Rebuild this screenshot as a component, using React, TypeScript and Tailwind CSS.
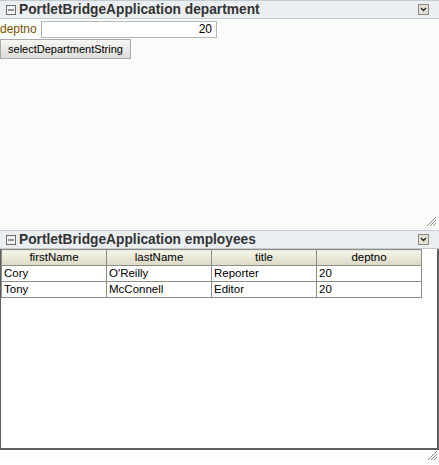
import React from "react";

const font = { fontFamily: "'Liberation Sans', Arial, sans-serif" };

const MinusBox = () => (
  <svg width="10" height="10" viewBox="0 0 10 10" className="shrink-0">
    <rect x="0.5" y="0.5" width="9" height="9" fill="#f4f4f4" stroke="#6d6d6d" />
    <rect x="2" y="4.5" width="6" height="1" fill="#333" />
  </svg>
);

const MenuBox = () => (
  <svg width="11" height="11" viewBox="0 0 11 11" className="shrink-0">
    <rect x="0.5" y="0.5" width="10" height="10" fill="#e4e0d4" stroke="#8a8a80" />
    <path d="M3 4 L5.5 6.5 L8 4" fill="none" stroke="#222" strokeWidth="1.4" />
  </svg>
);

const Grip = () => (
  <svg width="11" height="11" viewBox="0 0 11 11">
    <path d="M1 10 L10 1 M4 10 L10 4 M7 10 L10 7" stroke="#8c8c8c" strokeWidth="1" />
  </svg>
);

const TitleBar = ({ title }: { title: string }) => (
  <div className="flex h-[19px] items-center gap-[3px] border-y border-[#c4cbd0] bg-[#ebeff2] pl-[6px] pr-[10px]">
    <MinusBox />
    <span className="flex-1 text-[13.75px] font-bold leading-none text-[#333]">{title}</span>
    <MenuBox />
  </div>
);

const employees = [
  { firstName: "Cory", lastName: "O'Reilly", title: "Reporter", deptno: "20" },
  { firstName: "Tony", lastName: "McConnell", title: "Editor", deptno: "20" },
];

const cols = ["firstName", "lastName", "title", "deptno"] as const;

export default function App() {
  return (
    <div className="h-[465px] w-[439px] overflow-hidden bg-white text-[11.5px] text-black" style={font}>
      {/* department portlet */}
      <TitleBar title="PortletBridgeApplication department" />
      <div className="flex h-[209px] flex-col bg-[#fbfdfb]">
        <div className="mt-[1px] flex items-center">
          <span className="w-[41px] text-[12px] text-[#7a5200]">deptno</span>
          <div className="flex h-[17px] w-[176px] items-center justify-end border border-[#b5b5b5] bg-white pr-[4px] text-[12px]">
            20
          </div>
        </div>
        <div className="mt-[1px]">
          <button className="h-[20px] w-[131px] whitespace-nowrap border border-[#a9a9a9] bg-gradient-to-b from-[#f6f6f4] to-[#dcdcd8] p-0 text-center text-[11px]">
            selectDepartmentString
          </button>
        </div>
        <div className="flex-1" />
        <div className="flex justify-end pr-[2px] pb-[1px]">
          <Grip />
        </div>
      </div>
      <div className="h-[1px] bg-[#f0f2f3]" />
      <div className="h-[1px] bg-white" />

      {/* employees portlet */}
      <TitleBar title="PortletBridgeApplication employees" />
      <div className="h-[201px] w-[439px] border-b-2 border-r-2 border-l border-[#5f5f5f] bg-white">
        <table className="border-collapse">
          <thead>
            <tr>
              {cols.map((c) => (
                <th
                  key={c}
                  className="h-[16px] w-[105px] border border-[#8e8e86] bg-gradient-to-b from-[#f6f5ea] to-[#dcd9c5] p-0 text-center font-normal leading-none"
                >
                  {c}
                </th>
              ))}
            </tr>
          </thead>
          <tbody>
            {employees.map((e) => (
              <tr key={e.firstName}>
                {cols.map((c) => (
                  <td key={c} className="h-[16px] border border-[#8e8e86] px-[2px] py-0 leading-none">
                    {e[c]}
                  </td>
                ))}
              </tr>
            ))}
          </tbody>
        </table>
      </div>
      <div className="flex justify-end bg-[#fbfdfb] pr-[1px]">
        <Grip />
      </div>
    </div>
  );
}
